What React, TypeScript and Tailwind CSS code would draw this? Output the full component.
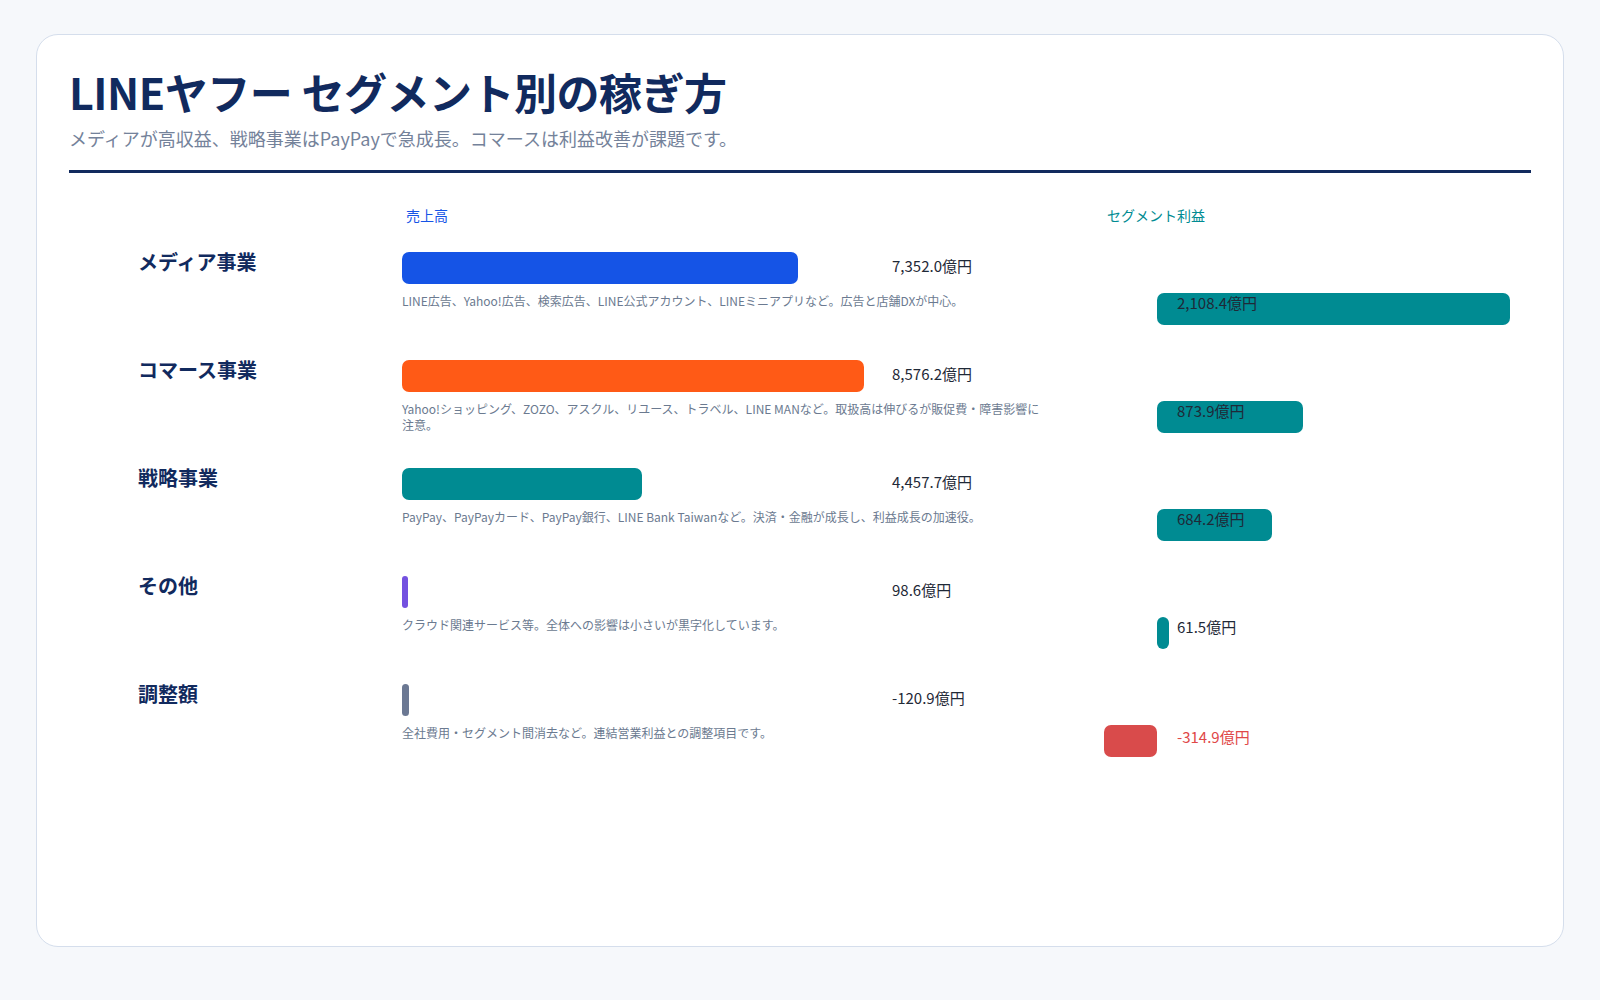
const rows = [
  { name: "メディア事業", sales: 7352.0, color: "bg-[#1554e6]", profit: 2108.4, desc: "LINE広告、Yahoo!広告、検索広告、LINE公式アカウント、LINEミニアプリなど。広告と店舗DXが中心。" },
  { name: "コマース事業", sales: 8576.2, color: "bg-[#ff5a16]", profit: 873.9, desc: "Yahoo!ショッピング、ZOZO、アスクル、リユース、トラベル、LINE MANなど。取扱高は伸びるが販促費・障害影響に注意。" },
  { name: "戦略事業", sales: 4457.7, color: "bg-[#008b92]", profit: 684.2, desc: "PayPay、PayPayカード、PayPay銀行、LINE Bank Taiwanなど。決済・金融が成長し、利益成長の加速役。" },
  { name: "その他", sales: 98.6, color: "bg-[#7451e0]", profit: 61.5, desc: "クラウド関連サービス等。全体への影響は小さいが黒字化しています。" },
  { name: "調整額", sales: -120.9, color: "bg-[#6b7893]", profit: -314.9, desc: "全社費用・セグメント間消去など。連結営業利益との調整項目です。" },
];

const fmt = (v: number) =>
  (v < 0 ? "-" : "") + Math.abs(v).toLocaleString("en-US", { minimumFractionDigits: 1, maximumFractionDigits: 1 }) + "億円";

export default function App() {
  return (
    <div className="min-h-[1000px] bg-[#f6f8fb] pt-[34px] px-[36px] pb-[33px]" style={{ fontFamily: '"Noto Sans CJK JP", "Noto Sans", sans-serif' }}>
      <div className="h-[913px] bg-white border border-[#d5deec] rounded-[22px] pl-[32px] pr-[32px] pt-[28px]">
        <h1 className="text-[43px] font-bold text-[#112a5e] leading-[56px] tracking-[-0.5px]">LINEヤフー セグメント別の稼ぎ方</h1>
        <p className="text-[18px] text-[#74829a] mt-[6px] leading-[26px]">メディアが高収益、戦略事業はPayPayで急成長。コマースは利益改善が課題です。</p>
        <div className="h-[3px] bg-[#112a5e] mt-[19px]" />
        <div className="flex mt-[32px] text-[14px] leading-[20px]">
          <div className="w-[337px]" />
          <div className="w-[701px] text-[#1554e6]">売上高</div>
          <div className="text-[#008b92]">セグメント利益</div>
        </div>
        <div className="mt-[21px]">
          {rows.map((r) => {
            const sw = Math.max(6, Math.abs(r.sales) * 0.0539);
            const pw = Math.max(12, Math.abs(r.profit) * 0.1675);
            const neg = r.profit < 0;
            return (
              <div key={r.name} className="h-[108px] flex">
                <div className="w-[333px] pl-[69px] pt-[2px] text-[20px] font-bold text-[#112a5e] leading-[28px]">{r.name}</div>
                <div className="w-[755px] pt-[6px]">
                  <div className="flex h-[32px] items-center">
                    <div className="w-[490px]">
                      <div className={`h-[32px] rounded-[7px] ${r.color}`} style={{ width: sw }} />
                    </div>
                    <div className="text-[15px] text-[#1f2937] -mt-[4px]">{fmt(r.sales)}</div>
                  </div>
                  <p className="mt-[9px] w-[640px] text-[12px] leading-[16px] text-[#6b7a90]">{r.desc}</p>
                </div>
                <div className="pt-[47px] flex-1">
                  <div className="flex items-start h-[32px]">
                    <div className={`h-[32px] rounded-[7px] shrink-0 ${neg ? "bg-[#d94b4b]" : "bg-[#008b92]"}`} style={{ width: pw, marginLeft: neg ? -pw : 0 }} />
                    <div className={`text-[15px] leading-[20px] whitespace-nowrap ${neg ? "text-[#e04848] pt-[2px]" : "text-[#1f2937]"}`} style={{ marginLeft: neg ? 20 : 20 - pw }}>{fmt(r.profit)}</div>
                  </div>
                </div>
              </div>
            );
          })}
        </div>
      </div>
    </div>
  );
}
